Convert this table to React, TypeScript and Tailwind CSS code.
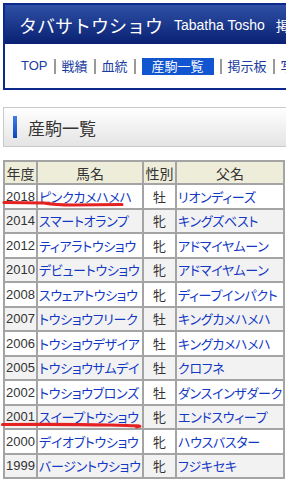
const jp = "font-['Noto_Sans_CJK_JP','Noto_Sans',sans-serif]";
const arial = "font-['Liberation_Sans',Arial,sans-serif]";

const navItems = ["TOP", "戦績", "血統", "産駒一覧", "掲示板", "写真"];

const rows = [
  { year: "2018", name: "ピンクカメハメハ", sex: "牡", sire: "リオンディーズ" },
  { year: "2014", name: "スマートオランプ", sex: "牝", sire: "キングズベスト" },
  { year: "2012", name: "ティアラトウショウ", sex: "牝", sire: "アドマイヤムーン" },
  { year: "2010", name: "デビュートウショウ", sex: "牝", sire: "アドマイヤムーン" },
  { year: "2008", name: "スウェアトウショウ", sex: "牝", sire: "ディープインパクト" },
  { year: "2007", name: "トウショウフリーク", sex: "牡", sire: "キングカメハメハ" },
  { year: "2006", name: "トウショウデザイア", sex: "牡", sire: "キングカメハメハ" },
  { year: "2005", name: "トウショウサムデイ", sex: "牡", sire: "クロフネ" },
  { year: "2002", name: "トウショウブロンズ", sex: "牡", sire: "ダンスインザダーク" },
  { year: "2001", name: "スイープトウショウ", sex: "牝", sire: "エンドスウィープ" },
  { year: "2000", name: "デイオブトウショウ", sex: "牝", sire: "ハウスバスター" },
  { year: "1999", name: "バージントウショウ", sex: "牝", sire: "フジキセキ" },
];

function Header() {
  return (
    <div className="w-[440px] border-2 border-r-0 border-[#0b2a8c]">
      <div className="flex h-[39px] items-center bg-gradient-to-b from-[#2f50a6] to-[#0a2072] pl-[14px] text-white">
        <span className={`${jp} text-[18px] leading-none`}>タバサトウショウ</span>
        <span className={`${arial} ml-[11px] text-[14px] leading-none`}>Tabatha Tosho</span>
        <span className={`${jp} ml-[11px] text-[14px] leading-none`}>掲示板</span>
      </div>
      <div className={`${jp} flex h-[44px] items-center pl-[16px] text-[13px] text-[#1a3c9e]`}>
        {navItems.map((item, i) => (
          <div key={item} className="flex items-center">
            {i > 0 && <span className="mx-[6px] h-[15px] w-[2px] bg-[#9a9a9a]" />}
            {item === "産駒一覧" ? (
              <span className="flex h-[17px] w-[72px] items-center justify-center bg-[#1155d0] text-white">{item}</span>
            ) : (
              <span className={item === "TOP" ? arial + " text-[13px]" : ""}>{item}</span>
            )}
          </div>
        ))}
      </div>
    </div>
  );
}

function SectionTitle() {
  return (
    <div className="mt-[17px] flex h-[40px] w-[440px] items-center border border-r-0 border-[#c9c9c9] bg-gradient-to-b from-white to-[#e4e4e4] pl-[9px]">
      <span className="h-[22px] w-[4px] bg-gradient-to-b from-[#3f7ee6] to-[#0a47bd]" />
      <span className={`${jp} ml-[11px] text-[17px] leading-none text-[#333]`}>産駒一覧</span>
    </div>
  );
}

function FoalTable() {
  const cell = "border-2 border-[#a4a4a4] p-0 text-[13px] leading-none";
  const link = `${jp} ${cell} whitespace-nowrap pl-[1px] tracking-[-0.3px] text-[#1238c4] [font-feature-settings:'palt']`;
  return (
    <table className="mt-[13px] w-[280px] table-fixed border-collapse">
      <colgroup>
        <col className="w-[33px]" />
        <col className="w-[106px]" />
        <col className="w-[33px]" />
        <col className="w-[108px]" />
      </colgroup>
      <thead>
        <tr className="h-[23px] bg-[#eeedd9]">
          {["年度", "馬名", "性別", "父名"].map((h) => (
            <th key={h} className={`${jp} border-2 border-[#a4a4a4] p-0 text-center text-[14px] font-normal leading-none text-[#333]`}>
              {h}
            </th>
          ))}
        </tr>
      </thead>
      <tbody>
        {rows.map((r, i) => (
          <tr key={r.year} className={`h-[24.5px] ${i % 2 === 1 ? "bg-[#f2f2f2]" : "bg-white"}`}>
            <td className={`${arial} ${cell} pl-[1px] text-[#333]`}>{r.year}</td>
            <td className={link}>{r.name}</td>
            <td className={`${jp} ${cell} text-center text-[#333]`}>{r.sex}</td>
            <td className={link}>{r.sire}</td>
          </tr>
        ))}
      </tbody>
    </table>
  );
}

export default function App() {
  return (
    <div className="relative h-[481px] w-[286px] overflow-hidden bg-white pl-[3px] pt-[3px]">
      <Header />
      <SectionTitle />
      <FoalTable />
      {/* hand-drawn red underlines */}
      <svg className="pointer-events-none absolute left-0 top-0" width="286" height="481" viewBox="0 0 286 481">
        <path d="M4 202.5 L44 203 Q56 205 72 205 L122 204.5" fill="none" stroke="#e42222" strokeWidth="3.2" strokeLinecap="round" />
        <path d="M2.5 424.5 Q70 424 110 425 T136.5 426.8" fill="none" stroke="#e42222" strokeWidth="3.2" strokeLinecap="round" />
      </svg>
    </div>
  );
}
